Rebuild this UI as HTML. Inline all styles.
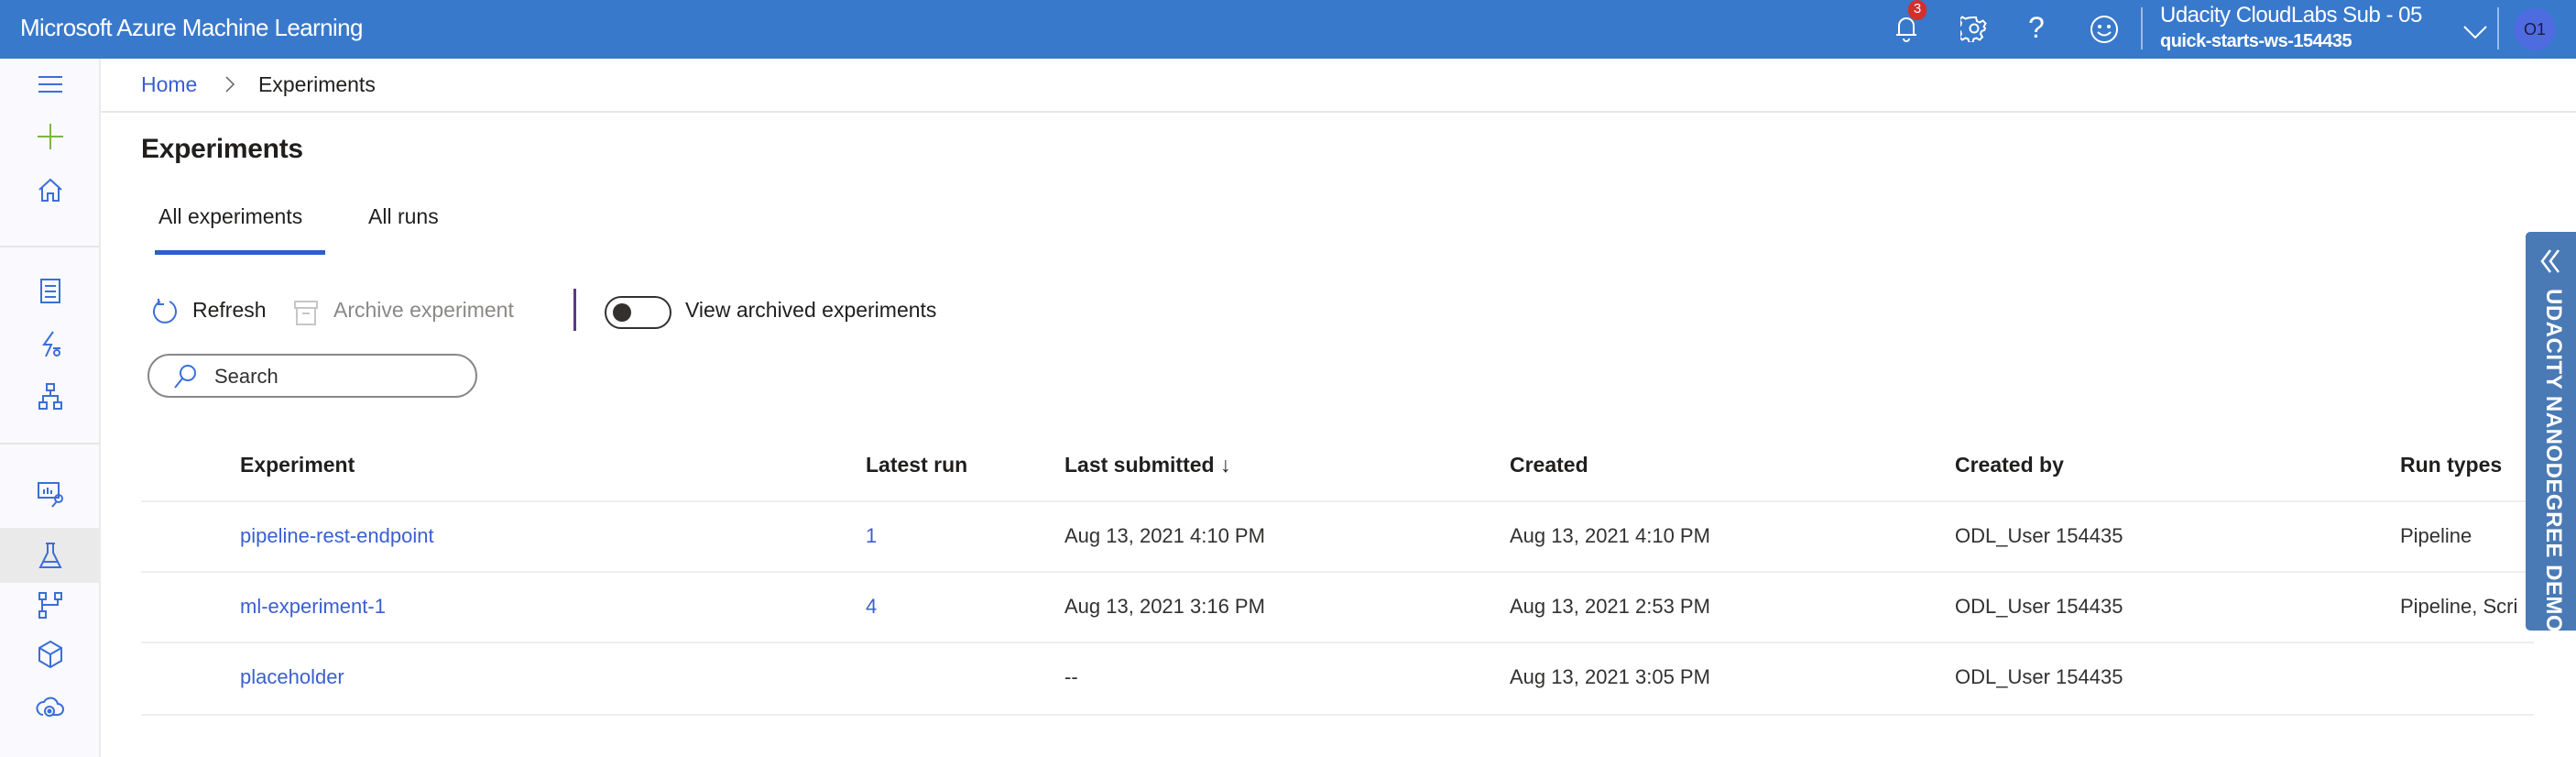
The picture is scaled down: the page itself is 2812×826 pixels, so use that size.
<!DOCTYPE html>
<html><head><meta charset="utf-8">
<style>
*{box-sizing:border-box;margin:0;padding:0}
body{width:2812px;height:826px;overflow:hidden;background:#fff;font-family:"Liberation Sans",sans-serif;color:#323130;position:relative;font-size:22px}
.abs{position:absolute;white-space:nowrap}
.hdr{position:absolute;left:0;top:0;width:2812px;height:64px;background:#3879cc}
.side{position:absolute;left:0;top:64px;width:110px;height:762px;background:#faf9fd;border-right:2px solid #edebe9}
.ico{position:absolute;left:38px;width:34px;height:34px}
.ico svg{width:34px;height:34px;fill:none;stroke:#3a6fd8;stroke-width:2}
.link{color:#3a5fd0}
.hr{position:absolute;left:154px;width:2612px;height:2px;background:#efeeed}
</style></head><body>
<div class="hdr"></div>
<div class="abs" style="left:22px;top:15px;color:#fff;font-size:26px;letter-spacing:-0.6px">Microsoft Azure Machine Learning</div>
<!-- header icons -->
<svg class="abs" style="left:2066px;top:14px" width="30" height="34" viewBox="0 0 30 34" fill="none" stroke="#fff" stroke-width="2"><path d="M7 24V14a8 8 0 0 1 16 0v10zM4 24h22M12 28a3 3 0 0 0 6 0"/></svg>
<div class="abs" style="left:2083px;top:0;width:20px;height:22px;border-radius:11px;background:#d32f2f;color:#fff;font-size:15px;text-align:center;line-height:20px">3</div>
<svg class="abs" style="left:2140px;top:16px" width="30" height="30" viewBox="0 0 30 30" fill="none" stroke="#fff" stroke-width="2"><circle cx="15" cy="15" r="4.5"/><path d="M13 3h4l1 4 3 1.5 3.5-2 3 3-2 3.5L27 15l-1 2-3 1-1 3 2 3.5-3 3-3.5-2-3 1-1 4h-4l-1-4-3-1-3.5 2-3-3 2-3.5-1-3-4-1v-4l4-1 1-3-2-3.5 3-3 3.5 2 3-1z"/></svg>
<div class="abs" style="left:2214px;top:12px;color:#fff;font-size:32px">?</div>
<svg class="abs" style="left:2280px;top:15px" width="34" height="34" viewBox="0 0 34 34" fill="none" stroke="#fff" stroke-width="2"><circle cx="17" cy="17" r="14"/><circle cx="12" cy="14" r="1" fill="#fff"/><circle cx="22" cy="14" r="1" fill="#fff"/><path d="M10 20q7 7 14 0"/></svg>
<div class="abs" style="left:2337px;top:8px;width:2px;height:46px;background:#9bbbe6"></div>
<div class="abs" style="left:2358px;top:3px;color:#fff;font-size:24px;letter-spacing:-0.5px">Udacity CloudLabs Sub - 05</div>
<div class="abs" style="left:2358px;top:34px;color:#fff;font-size:20px;font-weight:bold;letter-spacing:-0.5px">quick-starts-ws-154435</div>
<svg class="abs" style="left:2688px;top:26px" width="28" height="18" viewBox="0 0 28 18" fill="none" stroke="#fff" stroke-width="2"><path d="M2 3l12 12 12-12"/></svg>
<div class="abs" style="left:2726px;top:8px;width:2px;height:46px;background:#9bbbe6"></div>
<div class="abs" style="left:2744px;top:9px;width:46px;height:46px;border-radius:23px;background:#4f6be0;color:#1a1a40;font-size:18px;text-align:center;line-height:46px">O1</div>

<div class="side"></div>
<div class="ico" style="top:75px"><svg viewBox="0 0 34 34"><path d="M4 9h26M4 17h26M4 25h26"/></svg></div>
<div class="ico" style="top:132px"><svg viewBox="0 0 34 34" style="stroke:#7ab648"><path d="M17 3v28M3 17h28"/></svg></div>
<div class="ico" style="top:191px"><svg viewBox="0 0 34 34"><path d="M5 16L17 5l12 11M8 14v14h6v-8h6v8h6V14"/></svg></div>
<div class="abs" style="left:0;top:268px;width:108px;height:2px;background:#e8e6e4"></div>
<div class="ico" style="top:300px"><svg viewBox="0 0 34 34"><rect x="7" y="5" width="20" height="25"/><path d="M11 12h12M11 18h12M11 24h12"/></svg></div>
<div class="ico" style="top:358px"><svg viewBox="0 0 34 34"><path d="M20 4L10 18h8l-6 13M20 22h8"/><circle cx="24" cy="27" r="3"/></svg></div>
<div class="ico" style="top:415px"><svg viewBox="0 0 34 34"><rect x="13" y="4" width="8" height="7"/><rect x="5" y="24" width="8" height="7"/><rect x="21" y="24" width="8" height="7"/><path d="M17 11v6M9 24v-7h16v7"/></svg></div>
<div class="abs" style="left:0;top:483px;width:108px;height:2px;background:#e8e6e4"></div>
<div class="ico" style="top:521px"><svg viewBox="0 0 34 34"><rect x="4" y="6" width="22" height="16"/><path d="M10 18v-5M14 18v-7M18 18v-4M24 26l-5 6"/><circle cx="26" cy="23" r="4"/></svg></div>
<div class="abs" style="left:0;top:576px;width:108px;height:60px;background:#ebeaea"></div>
<div class="ico" style="top:589px"><svg viewBox="0 0 34 34"><path d="M12 4h10M14 4v10L6 30h22L20 14V4M9 24h16"/></svg></div>
<div class="ico" style="top:643px"><svg viewBox="0 0 34 34"><rect x="5" y="4" width="7" height="7"/><rect x="22" y="4" width="7" height="7"/><rect x="5" y="24" width="7" height="7"/><path d="M8 11v13M25 11v6H8"/></svg></div>
<div class="ico" style="top:697px"><svg viewBox="0 0 34 34"><path d="M17 3l12 7v14l-12 7-12-7V10zM5 10l12 7 12-7M17 17v14"/></svg></div>
<div class="ico" style="top:754px"><svg viewBox="0 0 34 34"><path d="M9 26a7 7 0 0 1 1-14 8 8 0 0 1 15 2 6 6 0 0 1 0 12h-6"/><circle cx="16" cy="22" r="5"/><circle cx="16" cy="22" r="1.5" fill="#3a6fd8"/></svg></div>

<!-- breadcrumb -->
<div class="abs link" style="left:154px;top:79px;font-size:23px">Home</div>
<svg class="abs" style="left:244px;top:82px" width="14" height="20" viewBox="0 0 14 20" fill="none" stroke="#605e5c" stroke-width="1.5"><path d="M3 2l8 8-8 8"/></svg>
<div class="abs" style="left:282px;top:79px;font-size:23px;color:#201f1e">Experiments</div>
<div class="abs" style="left:110px;top:121px;width:2702px;height:2px;background:#e6e6e6"></div>

<div class="abs" style="left:154px;top:146px;font-size:30px;font-weight:600;color:#201f1e;letter-spacing:-0.3px">Experiments</div>
<div class="abs" style="left:173px;top:223px;font-size:23px;color:#201f1e">All experiments</div>
<div class="abs" style="left:402px;top:223px;font-size:23px;color:#201f1e">All runs</div>
<div class="abs" style="left:169px;top:273px;width:186px;height:5px;background:#2c5fcc"></div>

<!-- toolbar -->
<svg class="abs" style="left:165px;top:324px" width="30" height="32" viewBox="0 0 30 32" fill="none" stroke="#3a6fd8" stroke-width="2"><path d="M10 5A12 12 0 1 0 20 5M8 2v6h6"/></svg>
<div class="abs" style="left:210px;top:325px;font-size:23px;color:#201f1e">Refresh</div>
<svg class="abs" style="left:320px;top:326px" width="28" height="30" viewBox="0 0 28 30" fill="none" stroke="#c8c6c4" stroke-width="2"><rect x="2" y="3" width="24" height="7"/><path d="M4 10v18h20V10M10 16h8"/></svg>
<div class="abs" style="left:364px;top:325px;font-size:23px;color:#8a8886">Archive experiment</div>
<div class="abs" style="left:626px;top:315px;width:3px;height:46px;background:#5a3a8a"></div>
<div class="abs" style="left:660px;top:323px;width:73px;height:36px;border:2.5px solid #323130;border-radius:18px"></div>
<div class="abs" style="left:669px;top:331px;width:20px;height:20px;border-radius:10px;background:#323130"></div>
<div class="abs" style="left:748px;top:325px;font-size:23px;color:#201f1e">View archived experiments</div>

<div class="abs" style="left:161px;top:386px;width:360px;height:48px;border:2px solid #8a8886;border-radius:24px"></div>
<svg class="abs" style="left:188px;top:396px" width="28" height="30" viewBox="0 0 28 30" fill="none" stroke="#3a6fd8" stroke-width="2"><circle cx="17" cy="11" r="8"/><path d="M11 17L3 27"/></svg>
<div class="abs" style="left:234px;top:398px;font-size:22px;color:#323130">Search</div>

<!-- table -->
<div class="abs" style="left:262px;top:494px;font-size:23px;font-weight:600;color:#201f1e">Experiment</div>
<div class="abs" style="left:945px;top:494px;font-size:23px;font-weight:600;color:#201f1e">Latest run</div>
<div class="abs" style="left:1162px;top:494px;font-size:23px;font-weight:600;color:#201f1e">Last submitted ↓</div>
<div class="abs" style="left:1648px;top:494px;font-size:23px;font-weight:600;color:#201f1e">Created</div>
<div class="abs" style="left:2134px;top:494px;font-size:23px;font-weight:600;color:#201f1e">Created by</div>
<div class="abs" style="left:2620px;top:494px;font-size:23px;font-weight:600;color:#201f1e">Run types</div>
<div class="hr" style="top:546px"></div>

<div class="abs link" style="left:262px;top:572px">pipeline-rest-endpoint</div>
<div class="abs link" style="left:945px;top:572px">1</div>
<div class="abs" style="left:1162px;top:572px">Aug 13, 2021 4:10 PM</div>
<div class="abs" style="left:1648px;top:572px">Aug 13, 2021 4:10 PM</div>
<div class="abs" style="left:2134px;top:572px">ODL_User 154435</div>
<div class="abs" style="left:2620px;top:572px">Pipeline</div>
<div class="hr" style="top:623px"></div>

<div class="abs link" style="left:262px;top:649px">ml-experiment-1</div>
<div class="abs link" style="left:945px;top:649px">4</div>
<div class="abs" style="left:1162px;top:649px">Aug 13, 2021 3:16 PM</div>
<div class="abs" style="left:1648px;top:649px">Aug 13, 2021 2:53 PM</div>
<div class="abs" style="left:2134px;top:649px">ODL_User 154435</div>
<div class="abs" style="left:2620px;top:649px">Pipeline, Scri</div>
<div class="hr" style="top:700px"></div>

<div class="abs link" style="left:262px;top:726px">placeholder</div>
<div class="abs" style="left:1162px;top:726px">--</div>
<div class="abs" style="left:1648px;top:726px">Aug 13, 2021 3:05 PM</div>
<div class="abs" style="left:2134px;top:726px">ODL_User 154435</div>
<div class="hr" style="top:779px"></div>

<!-- right tab -->
<div class="abs" style="left:2757px;top:253px;width:55px;height:435px;background:#4a7ab5;border-radius:5px 0 0 5px"></div>
<svg class="abs" style="left:2772px;top:270px" width="24" height="30" viewBox="0 0 24 30" fill="none" stroke="#fff" stroke-width="2.5"><path d="M12 3L3 15l9 12M21 3l-9 12 9 12"/></svg>
<div class="abs" style="left:2771px;top:315px;width:30px;height:370px;"><div style="position:absolute;left:30px;top:0;transform-origin:0 0;transform:rotate(90deg);color:#fff;font-weight:bold;font-size:24px;white-space:nowrap;letter-spacing:0.5px">UDACITY NANODEGREE DEMO</div></div>
</body></html>
